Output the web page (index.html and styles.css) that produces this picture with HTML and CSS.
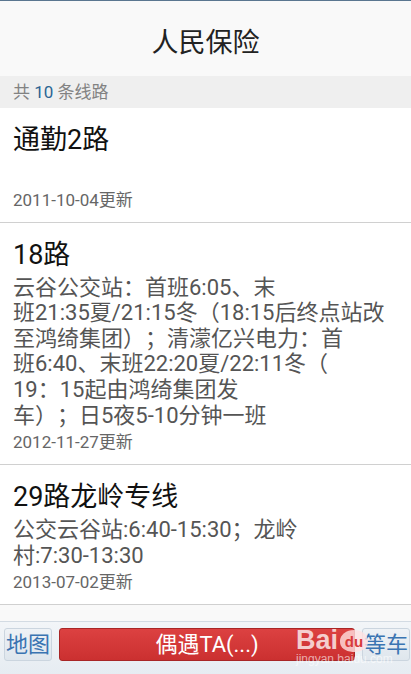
FILE: index.html
```html
<!DOCTYPE html>
<html lang="zh-CN">
<head>
    <meta charset="UTF-8">
    <meta name="viewport" content="width=device-width, initial-scale=1.0">
    <title>人民保险</title>
    <link rel="stylesheet" href="styles.css">
</head>
<body>
    <div class="screen">
        <div class="header">人民保险</div>

        <div class="count-bar">共 <span class="count">10</span> 条线路</div>

        <!-- Route list -->
        <div class="route-list">
            <div class="route">
                <div class="route-name">通勤2路</div>
                <div class="route-desc"></div>
                <div class="route-date">2011-10-04更新</div>
            </div>
            <div class="route">
                <div class="route-name">18路</div>
                <div class="route-desc">云谷公交站：首班6:05、末<br>班21:35夏/21:15冬（18:15后终点站改<br>至鸿绮集团）；清濛亿兴电力：首<br>班6:40、末班22:20夏/22:11冬（<br>19：15起由鸿绮集团发<br>车）；日5夜5-10分钟一班</div>
                <div class="route-date">2012-11-27更新</div>
            </div>
            <div class="route">
                <div class="route-name">29路龙岭专线</div>
                <div class="route-desc">公交云谷站:6:40-15:30；龙岭<br>村:7:30-13:30</div>
                <div class="route-date">2013-07-02更新</div>
            </div>
        </div>

        <!-- Bottom toolbar -->
        <div class="toolbar">
            <div class="side-btn">地图</div>
            <div class="main-btn">偶遇TA(...)</div>
            <div class="side-btn">等车</div>
        </div>

        <!-- watermark -->
        <div class="watermark">
            <div class="wm-logo">Bai<span class="wm-paw">du</span></div>
            <div class="wm-url">jingyan.baidu.com</div>
        </div>
    </div>
</body>
</html>
```

FILE: styles.css
```css
html, body {
    margin: 0;
    padding: 0;
}
body {
    font-family: Roboto, "Noto Sans CJK SC", sans-serif;
    background-color: #fafafa;
    color: #222;
}
.screen {
    position: relative;
    height: 674px;
    display: flex;
    flex-direction: column;
    overflow: hidden;
}
.header {
    height: 76px;
    box-sizing: border-box;
    border-top: 1px solid #5a7690;
    padding-top: 9px;
    line-height: 66px;
    background-color: #f9f9f9;
    text-align: center;
    font-size: 27px;
    color: #222;
}
.count-bar {
    height: 32px;
    line-height: 32px;
    padding-left: 13px;
    background-color: #efefef;
    font-size: 17px;
    color: #828282;
}
.count {
    color: #2b6593;
}
.route-list {
    flex: 1;
    overflow: hidden;
    background-color: #f9f9f9;
}
.route {
    padding: 16px 13px 11px;
    border-bottom: 1px solid #d0d0d0;
    background-color: #fff;
}
.route-name {
    font-size: 27px;
    line-height: 32px;
    color: #111;
}
.route-desc {
    margin-top: 4px;
    min-height: 25.6px;
    font-family: Roboto, "Noto Sans CJK TC", sans-serif;
    font-size: 22px;
    line-height: 25.6px;
    color: #555;
    white-space: nowrap;
    text-spacing-trim: space-all;
}
.route-date {
    margin-top: 3px;
    font-size: 17px;
    line-height: 22px;
    color: #666;
}
.toolbar {
    height: 53px;
    box-sizing: border-box;
    border-top: 1px solid #d3dbe3;
    padding: 6px 1px 0 4px;
    display: flex;
    gap: 7px;
    background: linear-gradient(#f2f5f8, #e6ecf2);
}
.side-btn {
    width: 48px;
    height: 33px;
    box-sizing: border-box;
    border: 1px solid #cbd5df;
    border-radius: 3px;
    background: linear-gradient(#eef2f6, #dfe6ed);
    color: #3a74b2;
    font-size: 22px;
    line-height: 31px;
    text-align: center;
}
.main-btn {
    flex: 1;
    height: 33px;
    box-sizing: border-box;
    border: 1px solid #a82626;
    border-radius: 3px;
    background: linear-gradient(#dc4141, #cb3030);
    color: #fff;
    font-size: 22px;
    line-height: 31px;
    text-align: center;
}
.watermark {
    position: absolute;
    left: 296px;
    top: 624px;
    color: rgba(255, 255, 255, 0.75);
    font-family: "Liberation Sans", Arial, sans-serif;
    pointer-events: none;
}
.wm-logo {
    font-size: 27px;
    font-weight: bold;
    line-height: 32px;
    white-space: nowrap;
}
.wm-paw {
    display: inline-block;
    width: 28px;
    height: 22px;
    margin-left: 2px;
    border-radius: 50% 50% 45% 45%;
    background-color: rgba(255, 225, 225, 0.8);
    color: #d83a3a;
    font-size: 15px;
    line-height: 24px;
    text-align: center;
    vertical-align: 2px;
}
.wm-url {
    font-size: 12px;
    line-height: 13px;
    margin-top: -3px;
    color: rgba(255, 255, 255, 0.6);
}
```
